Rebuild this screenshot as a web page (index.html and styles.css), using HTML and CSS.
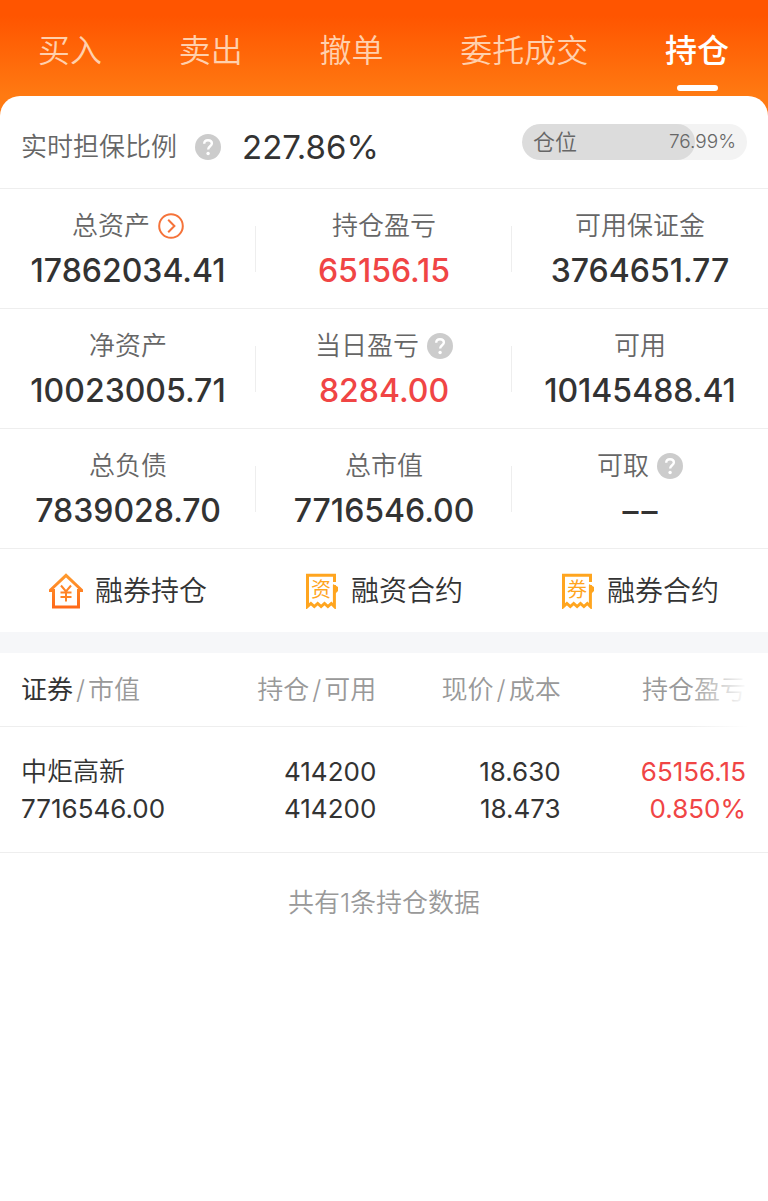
FILE: index.html
```html
<!DOCTYPE html>
<html lang="zh-CN">
<head>
    <meta charset="UTF-8">
    <meta name="viewport" content="width=device-width, initial-scale=1.0">
    <title>持仓</title>
    <link rel="stylesheet" href="styles.css">
</head>
<body>
    <!-- shared icons -->
    <svg class="icon-defs" width="0" height="0" aria-hidden="true">
        <symbol id="icon-help" viewBox="0 0 26 26">
            <circle cx="13" cy="13" r="13" fill="#cccccc"/>
            <path d="M9.200 9.800C9.200 7.500 10.700 6.200 13 6.200s3.900 1.300 3.900 3.300c0 2.700-3.800 2.900-3.800 6" fill="none" stroke="#fff" stroke-width="2.400"/>
            <circle cx="13.100" cy="19.500" r="1.700" fill="#fff"/>
        </symbol>
        <symbol id="icon-receipt" viewBox="0 0 34 36">
            <path d="M29.500 9V2.300H2.500V33.500l3.400-3 3.400 3 3.400-3 3.400 3 3.400-3 3.400 3 3.400-3 3.100 3V12" fill="none" stroke="#ffa51f" stroke-width="3"/>
            <path d="M28 11l5 3v4l-3 3z" fill="#ffa51f"/>
        </symbol>
    </svg>

    <header class="top-bar">
        <nav class="tabs">
            <button type="button" class="tab">买入</button>
            <button type="button" class="tab">卖出</button>
            <button type="button" class="tab">撤单</button>
            <button type="button" class="tab">委托成交</button>
            <button type="button" class="tab active">持仓</button>
        </nav>
    </header>

    <main class="panel">
        <section class="ratio">
            <span class="ratio-label">实时担保比例</span>
            <button type="button" class="icon-button" aria-label="担保比例说明"><svg class="help"><use href="#icon-help"/></svg></button>
            <span class="ratio-value">227.86%</span>
            <div class="gauge">
                <div class="gauge-fill" style="width: 76.99%"></div>
                <span class="gauge-label">仓位</span>
                <span class="gauge-value">76.99%</span>
            </div>
        </section>

        <section class="assets">
            <div class="asset">
                <div class="asset-label">总资产
                    <button type="button" class="icon-button" aria-label="总资产详情">
                        <svg class="arrow" viewBox="0 0 26 26">
                            <circle cx="13" cy="13" r="11.800"/>
                            <path d="M10.200 6.800l6.200 6.200-6.200 6.200"/>
                        </svg>
                    </button>
                </div>
                <div class="asset-value">17862034.41</div>
            </div>
            <div class="asset">
                <div class="asset-label">持仓盈亏</div>
                <div class="asset-value up">65156.15</div>
            </div>
            <div class="asset">
                <div class="asset-label">可用保证金</div>
                <div class="asset-value">3764651.77</div>
            </div>
            <div class="asset">
                <div class="asset-label">净资产</div>
                <div class="asset-value">10023005.71</div>
            </div>
            <div class="asset">
                <div class="asset-label">当日盈亏
                    <button type="button" class="icon-button" aria-label="当日盈亏说明"><svg class="help"><use href="#icon-help"/></svg></button>
                </div>
                <div class="asset-value up">8284.00</div>
            </div>
            <div class="asset">
                <div class="asset-label">可用</div>
                <div class="asset-value">10145488.41</div>
            </div>
            <div class="asset">
                <div class="asset-label">总负债</div>
                <div class="asset-value">7839028.70</div>
            </div>
            <div class="asset">
                <div class="asset-label">总市值</div>
                <div class="asset-value">7716546.00</div>
            </div>
            <div class="asset">
                <div class="asset-label">可取
                    <button type="button" class="icon-button" aria-label="可取说明"><svg class="help"><use href="#icon-help"/></svg></button>
                </div>
                <div class="asset-value">–&hairsp;–</div>
            </div>
        </section>

        <nav class="shortcuts">
            <a href="#" class="shortcut">
                <svg class="shortcut-icon" viewBox="0 0 34 36">
                    <defs>
                        <linearGradient id="house" x1="0" y1="0" x2="0" y2="1">
                            <stop offset="0" stop-color="#ff9a2e"/>
                            <stop offset="1" stop-color="#ff6a1a"/>
                        </linearGradient>
                    </defs>
                    <g fill="none" stroke="url(#house)" stroke-width="3">
                        <path d="M1 17.500h3.500V34h25V17.500H33L17 2.400z"/>
                        <path d="M12 12.500l5 6 5-6M17 18.500v10M11.500 19.500h11M11.500 24h11" stroke="#ff8426" stroke-width="2"/>
                    </g>
                </svg>
                融券持仓
            </a>
            <a href="#" class="shortcut">
                <svg class="shortcut-icon" viewBox="0 0 34 36">
                    <use href="#icon-receipt"/>
                    <text class="receipt-text" x="16" y="24" text-anchor="middle">资</text>
                </svg>
                融资合约
            </a>
            <a href="#" class="shortcut">
                <svg class="shortcut-icon" viewBox="0 0 34 36">
                    <use href="#icon-receipt"/>
                    <text class="receipt-text" x="16" y="24" text-anchor="middle">券</text>
                </svg>
                融券合约
            </a>
        </nav>

        <table class="holdings">
            <thead>
                <tr>
                    <th><b>证券</b><span class="slash">/</span>市值</th>
                    <th>持仓<span class="slash">/</span>可用</th>
                    <th>现价<span class="slash">/</span>成本</th>
                    <th class="faded">持仓盈亏</th>
                </tr>
            </thead>
            <tbody>
                <tr>
                    <td><span class="stock-name">中炬高新</span><br>7716546.00</td>
                    <td>414200<br>414200</td>
                    <td>18.630<br>18.473</td>
                    <td class="up">65156.15<br>0.850%</td>
                </tr>
            </tbody>
        </table>

        <p class="total">共有1条持仓数据</p>
    </main>
</body>
</html>
```
FILE: styles.css
```css
* {
    box-sizing: border-box;
}
body {
    margin: 0;
    font-family: Inter, "Noto Sans CJK SC", sans-serif;
    font-weight: 350;
    font-size: 26px;
    line-height: 36px;
    color: #333;
    background-color: #fff;
}
button {
    padding: 0;
    border: none;
    background: none;
    font: inherit;
    color: inherit;
    cursor: pointer;
}
a {
    color: inherit;
    text-decoration: none;
}
.icon-defs {
    position: absolute;
}
.top-bar {
    background: linear-gradient(#ff5500 16px, #ff7a12 96px);
    padding-bottom: 20px;
}
.tabs {
    display: flex;
    justify-content: space-between;
    height: 96px;
    padding: 0 39px 0 38px;
}
.tab {
    position: relative;
    height: 102px;
    font-size: 32px;
    color: #ffd0ad;
}
.tab.active {
    color: #fff;
    font-weight: 500;
}
.tab.active::after {
    content: "";
    position: absolute;
    left: 50%;
    bottom: 11px;
    width: 41px;
    height: 6px;
    margin-left: -20px;
    border-radius: 3px;
    background-color: #fff;
}
.panel {
    margin-top: -20px;
    border-radius: 20px 20px 0 0;
    background-color: #fff;
}

/* guarantee ratio */
.ratio {
    display: flex;
    align-items: center;
    height: 93px;
    padding: 10px 21px 0;
    border-bottom: 1px solid #eee;
}
.ratio-label {
    color: #666;
}
.icon-button {
    display: flex;
}
.help, .arrow {
    width: 26px;
    height: 26px;
}
.arrow {
    fill: none;
    stroke: #f5733a;
    stroke-width: 2;
}
.ratio .icon-button {
    margin: 0 21px 0 18px;
}
.ratio-value {
    font-size: 33px;
    font-weight: 400;
}
.gauge {
    position: relative;
    display: flex;
    align-items: center;
    justify-content: space-between;
    width: 225px;
    height: 36px;
    margin: 0 0 10px auto;
    padding: 0 11px;
    border-radius: 18px;
    overflow: hidden;
    background-color: #f3f3f3;
    color: #666;
}
.gauge-fill {
    position: absolute;
    left: 0;
    top: 0;
    height: 100%;
    border-radius: 18px;
    background-color: #dcdcdc;
}
.gauge-label, .gauge-value {
    position: relative;
    font-size: 22px;
}
.gauge-value {
    font-size: 19px;
}

/* asset figures */
.assets {
    display: grid;
    grid-template-columns: repeat(3, 1fr);
}
.asset {
    position: relative;
    padding: 19px 0;
    border-bottom: 1px solid #eee;
    text-align: center;
}
.asset:not(:nth-child(3n))::after {
    content: "";
    position: absolute;
    right: 0;
    top: 37px;
    width: 1px;
    height: 46px;
    background-color: #eee;
}
.asset-label {
    display: flex;
    align-items: center;
    justify-content: center;
    gap: 8px;
    color: #666;
}
.asset-value {
    margin-top: 9px;
    font-size: 32px;
    font-weight: 500;
}
.up {
    color: #f04545;
}

/* shortcuts */
.shortcuts {
    display: grid;
    grid-template-columns: repeat(3, 1fr);
    height: 83px;
}
.shortcut {
    display: flex;
    align-items: center;
    justify-content: center;
    gap: 12px;
    font-size: 28px;
}
.shortcut-icon {
    width: 34px;
    height: 36px;
}
.receipt-text {
    font-size: 20px;
    font-weight: 400;
    fill: #ffa51f;
}

/* holdings table */
.holdings {
    width: 100%;
    border-top: 21px solid #f6f7f9;
    border-spacing: 0;
    table-layout: fixed;
}
.holdings th, .holdings td {
    padding: 0 0 0 21px;
    text-align: right;
    font-weight: 350;
    border-bottom: 1px solid #eee;
}
.holdings th {
    height: 74px;
    color: #999;
    white-space: nowrap;
}
.holdings th b {
    color: #333;
    font-weight: 400;
}
.slash {
    padding: 0 3px;
}
.holdings td {
    height: 126px;
    line-height: 37px;
    font-weight: 400;
}
.stock-name {
    font-weight: 350;
}
.holdings th:first-child, .holdings td:first-child {
    text-align: left;
}
.holdings th:nth-child(3), .holdings td:nth-child(3) {
    width: 24%;
}
.holdings th:last-child, .holdings td:last-child {
    width: 27%;
    padding-right: 22px;
}
.holdings .faded {
    position: relative;
}
.faded::after {
    content: "";
    position: absolute;
    right: 0;
    top: 0;
    bottom: -1px;
    width: 80px;
    background: linear-gradient(to right, rgba(255, 255, 255, 0), #fff 60px);
}
.total {
    margin: 32px 0;
    text-align: center;
    color: #999;
}
```
